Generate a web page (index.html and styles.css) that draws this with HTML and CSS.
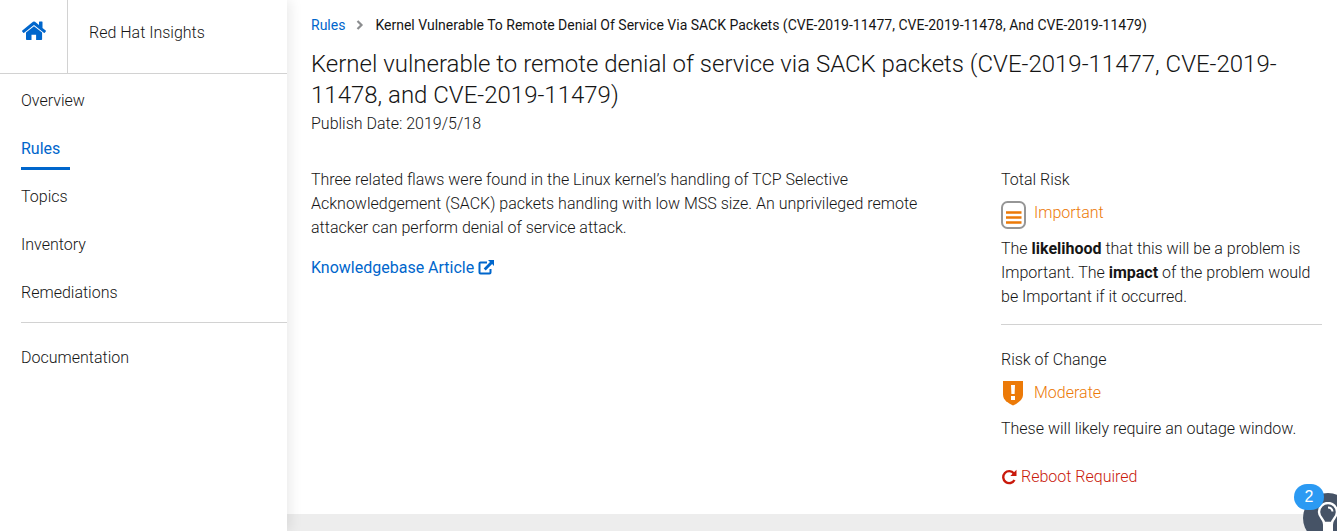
FILE: index.html
```html
<!DOCTYPE html>
<html lang="en">
<head>
<meta charset="utf-8">
<title>Red Hat Insights</title>
<link rel="stylesheet" href="styles.css">
</head>
<body>
<div class="app">
  <aside class="sidebar">
    <header class="brand">
      <a class="home" href="#" aria-label="Home">
        <svg width="24" height="20" viewBox="0 0 24 20" fill="#06c"><path d="M12 5.2 4 11.6V18.2q0 .8.8.8H9.5V13.7h4.6V19h5.2q.8 0 .8-.8V11.6Z"/><path d="M11 .8q1-.8 2 0L17 4V1q0-.5.5-.5h2.500q.5 0 .5.500V7L23.700 9.600q.5.4.1.9l-1.100 1.300q-.4.4-.9 0L12 3.900 2.200 11.800q-.5.4-.9 0L.2 10.500q-.4-.5.1-.9Z"/></svg>
      </a>
      <span class="brand-name">Red Hat Insights</span>
    </header>
    <nav class="nav">
      <a href="#">Overview</a>
      <a href="#" class="current" aria-current="page">Rules</a>
      <a href="#">Topics</a>
      <a href="#">Inventory</a>
      <a href="#">Remediations</a>
      <hr class="nav-rule">
      <a href="#">Documentation</a>
    </nav>
  </aside>
  <main class="main">
    <section class="page">
      <nav class="crumbs" aria-label="Breadcrumb">
        <a href="#">Rules</a>
        <svg width="8" height="10" viewBox="0 0 8 10" fill="none" stroke="#8b8d8f" stroke-width="2.200"><path d="M1.500 1 5.500 5 1.500 9"/></svg>
        <span>Kernel Vulnerable To Remote Denial Of Service Via SACK Packets (CVE-2019-11477, CVE-2019-11478, And CVE-2019-11479)</span>
      </nav>
      <h1 class="title">Kernel vulnerable to remote denial of service via SACK packets (CVE-2019-11477, CVE-2019-11478, and CVE-2019-11479)</h1>
      <p class="date">Publish Date: 2019/5/18</p>
      <div class="columns">
        <div class="summary">
          <p>Three related flaws were found in the Linux kernel’s handling of TCP Selective Acknowledgement (SACK) packets handling with low MSS size. An unprivileged remote attacker can perform denial of service attack.</p>
          <a class="article" href="#">Knowledgebase Article
            <svg width="16" height="16" viewBox="0 0 16 16"><path d="M9 2.500H2.500q-1 0-1 1V12.500q0 1 1 1H11.500q1 0 1-1V9" fill="none" stroke="#06c" stroke-width="2"/><path d="M10 0h6v6l-1.900-1.900L7.700 10.500 5.700 8.500l6.300-6.400Z" fill="#06c"/></svg>
          </a>
        </div>
        <div class="risks">
          <section class="risk">
            <h2>Total Risk</h2>
            <div class="level">
              <svg width="25" height="28" viewBox="0 0 25 28"><rect x="1" y="1" width="23" height="26" rx="5.500" fill="#fff" stroke="#969696" stroke-width="2"/><path d="M5 11.500H20.500M5 16.500H20.500M5 21.500H20.500" stroke="#ec7a08" stroke-width="2.600"/></svg>
              <span>Important</span>
            </div>
            <p>The <b>likelihood</b> that this will be a problem is Important. The <b>impact</b> of the problem would be Important if it occurred.</p>
          </section>
          <hr class="divider">
          <section class="risk">
            <h2>Risk of Change</h2>
            <div class="level">
              <svg width="25" height="28" viewBox="0 0 25 28"><path d="M2 0H22V13.500C22 19 17 22 12 24.500 7 22 2 19 2 13.500Z" fill="#ec7a08"/><path d="M10 4h4l-.4 9h-3.200ZM10 15h4v4h-4Z" fill="#fff"/></svg>
              <span>Moderate</span>
            </div>
            <p>These will likely require an outage window.</p>
            <div class="reboot">
              <svg width="16" height="16" viewBox="0 0 16 16"><path d="M12.900 4.400A6 6 0 1 0 13.500 11" fill="none" stroke="#c9190b" stroke-width="2.400"/><path d="M15.500 0.800V7H9.300Z" fill="#c9190b"/></svg>
              <span>Reboot Required</span>
            </div>
          </section>
        </div>
      </div>
    </section>
  </main>
</div>
<button class="help" type="button" aria-label="Guides, 2 new">
  <svg width="22" height="34" viewBox="0 0 22 34"><path d="M7 21c0-4-5-5.500-5-11a9 9 0 0 1 18 0c0 5.500-5 7-5 11Z" fill="none" stroke="#fff" stroke-width="2.400"/><path d="M11 5.500q4 0 4.500 4" fill="none" stroke="#fff" stroke-width="2"/><path d="M6 20H16V29H6Z" fill="#fff"/></svg>
  <span class="count">2</span>
</button>
</body>
</html>
```

FILE: styles.css
```css
* { box-sizing: border-box; }
body {
  margin: 0;
  background: #ededed;
  color: #151515;
  font: 300 16px/24px Roboto, "Liberation Sans", sans-serif;
  overflow: hidden;
}
h1, h2, p { margin: 0; font-weight: 300; }
a { color: #06c; text-decoration: none; }
svg { display: block; flex: none; }
b { font-weight: 700; }

.app { display: flex; min-height: 100vh; }
.sidebar {
  position: relative;
  flex: none;
  width: 287px;
  background: #fff;
  box-shadow: 4px 0 12px rgba(3, 3, 3, .08);
}
.brand {
  display: flex;
  height: 74px;
  border-bottom: 1px solid #d2d2d2;
}
.home {
  width: 68px;
  padding: 21px 22px;
  border-right: 1px solid #d2d2d2;
}
.brand-name { padding: 21px; }
.nav {
  display: flex;
  flex-direction: column;
  align-items: flex-start;
  gap: 3px;
  padding: 3px 0 0 21px;
}
.nav a {
  padding: 12px 10px 6px 0;
  border-bottom: 3px solid transparent;
  color: #151515;
}
.nav .current { color: #06c; border-color: #06c; font-weight: 400; }
.nav-rule {
  width: 100%;
  margin: 5px 0 8px;
  border: 0;
  border-top: 1px solid #d2d2d2;
}

.main { flex: 1; min-width: 0; }
.page { padding: 13px 15px 25px 24px; background: #fff; }
.crumbs {
  display: flex;
  align-items: center;
  gap: 11px;
  font-size: 14px;
  font-weight: 400;
}
.title { margin-top: 12px; font-size: 24px; line-height: 31px; }
.date { margin-top: 1px; }
.columns {
  display: grid;
  grid-template-columns: repeat(12, 1fr);
  gap: 24px;
  margin-top: 32px;
}
.summary { grid-column: span 8; }
.article {
  display: flex;
  align-items: center;
  gap: 4px;
  margin-top: 16px;
  font-weight: 400;
}
.risks { grid-column: span 4; }
.risk h2 { font-size: 16px; }
.level {
  display: flex;
  gap: 8px;
  margin: 9px 0 8px;
  height: 28px;
  color: #ec7a08;
}
.level span { line-height: 24px; }
.divider {
  margin: 15px 0 23px;
  border: 0;
  border-top: 1px solid #d2d2d2;
}
.reboot {
  display: flex;
  align-items: center;
  gap: 4px;
  margin-top: 24px;
  color: #c9190b;
}

.help {
  position: fixed;
  right: -16px;
  bottom: -12px;
  width: 50px;
  height: 50px;
  padding: 9px 14px;
  border: 0;
  border-radius: 50%;
  background: #465366;
}
.count {
  position: absolute;
  left: -9px;
  top: -9px;
  width: 30px;
  border-radius: 13px;
  background: #2b9af3;
  color: #fff;
  font: 16px/26px "Liberation Sans", sans-serif;
}
```
